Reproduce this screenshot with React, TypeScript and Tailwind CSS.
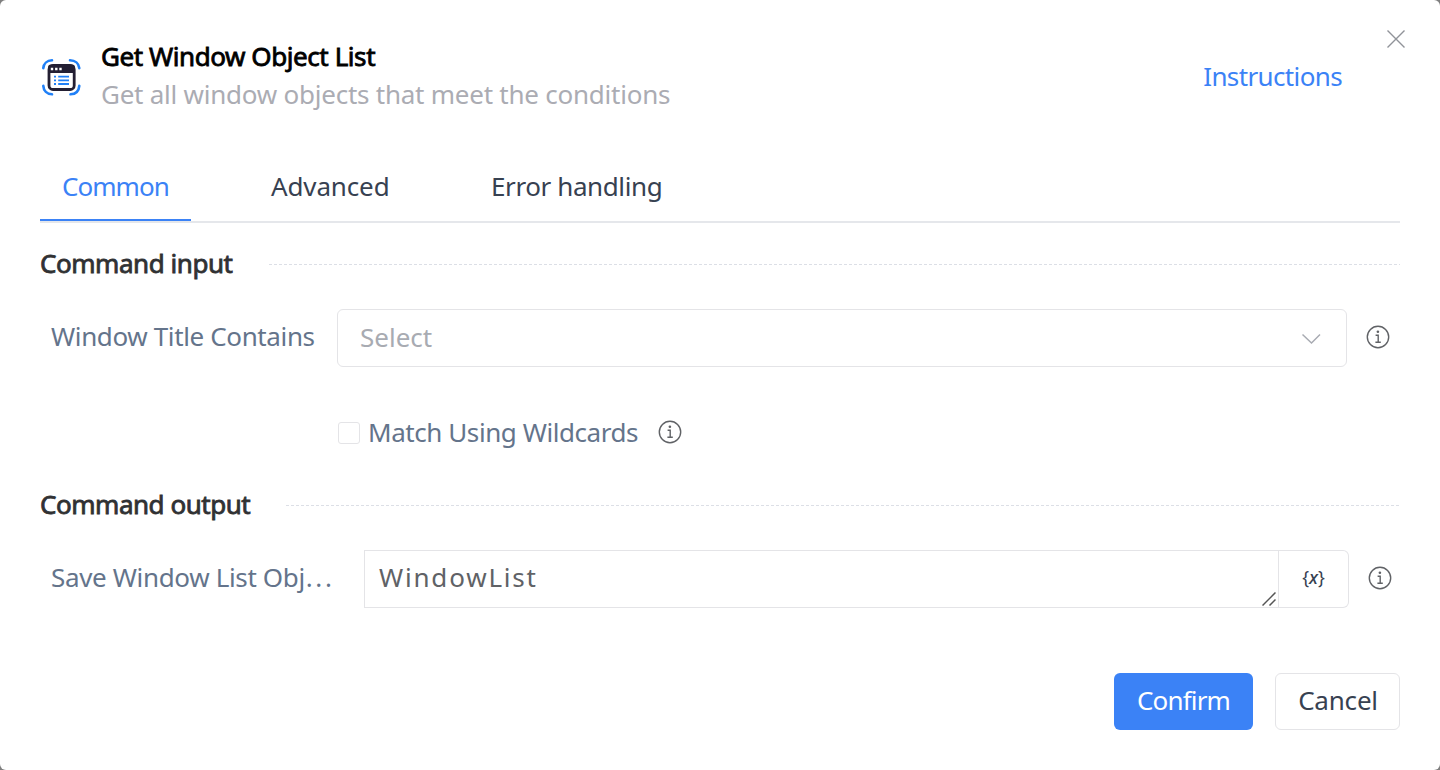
import type { ReactNode } from "react";

function InfoIcon() {
  return (
    <svg className="mb-[2px] h-6 w-6 shrink-0" viewBox="0 0 24 24" fill="none" stroke="#606266" strokeWidth="1.4">
      <circle cx="12" cy="12" r="10.7" />
      <path d="M9.6 10.2H12.2V17M9.4 17.2H14.8" />
      <circle cx="11.9" cy="6.7" r="1.3" fill="#606266" stroke="none" />
    </svg>
  );
}

function WindowIcon() {
  return (
    <svg className="h-10 w-10 shrink-0" viewBox="0 0 40 40" fill="none">
      <g stroke="#2080f7" strokeWidth="2.6" strokeLinecap="round">
        <path d="M2.3 10.2C2.6 5.6 6 2.5 11 2.3" />
        <path d="M29 2.3C34 2.5 37.9 5.6 38.3 10.2" />
        <path d="M2.3 27.8C2.6 32.8 6 36 11 36.3" />
        <path d="M38.3 27.8C37.9 32.8 34.5 36 29.5 36.3" />
      </g>
      <rect x="8" y="7.5" width="25.2" height="24" rx="4" stroke="#231f33" strokeWidth="2.8" />
      <path d="M7 14.9V9.5Q7 6.5 10 6.5H31Q34 6.5 34 9.5V14.9Z" fill="#231f33" />
      <path d="M9.8 9.8H12.2V12.2H9.8ZM14.1 9.8H16.5V12.2H14.1ZM18.3 9.8H20.7V12.2H18.3Z" fill="#fff" />
      <path d="M17.2 18.6H28M17.2 22.3H28M17.2 26H28M13 18.6H15M13 22.3H15M13 26H15" stroke="#2080f7" strokeWidth="1.8" />
    </svg>
  );
}

function Section({ children, width }: { children: ReactNode; width: string }) {
  return (
    <div className="flex items-center">
      <h2 className={"-mt-[2px] whitespace-nowrap text-[#303133] [-webkit-text-stroke:0.8px_#303133] " + width}>{children}</h2>
      <div className="h-px flex-1 bg-[repeating-linear-gradient(90deg,#dcdfe6_0_3px,transparent_3px_5px)]" />
    </div>
  );
}

export default function App() {
  return (
    <div className="h-[770px] w-[1440px] bg-[#7f7f7f] font-['Noto_Sans',sans-serif] text-[26px] leading-[38px]">
      <div className="flex h-full flex-col rounded-[6px] bg-white px-10">
        <header className="relative flex h-[154px] shrink-0 items-start pt-[37px]">
          <div className="mt-[21px] flex w-[61px] pl-px"><WindowIcon /></div>
          <div className="flex-1">
            <h1 className="w-max text-black tracking-[-0.43px] [-webkit-text-stroke:0.8px_#000]">Get Window Object List</h1>
            <p className="w-max tracking-[-0.24px] text-[#abacb3]">Get all window objects that meet the conditions</p>
          </div>
          <a className="mt-[20px] mr-[58px] tracking-[-0.63px] text-[#3b82f6]">Instructions</a>
          <svg className="absolute top-[29px] right-[-6px] h-5 w-5" viewBox="0 0 20 20" stroke="#909399" strokeWidth="1.4">
            <path d="M1.5 1.5L18.5 18.5M18.5 1.5L1.5 18.5" />
          </svg>
        </header>
        <nav className="flex h-[69px] shrink-0 items-stretch border-b-2 border-[#e5e7eb] text-[#374151]">
          <div className="w-[151px] border-b-2 border-[#3b82f6] pt-[13px] pl-[22px] tracking-[-0.95px] text-[#3b82f6]">Common</div>
          <div className="ml-[80px] w-[160px] pt-[13px] tracking-[-0.14px]">Advanced</div>
          <div className="ml-[60px] pt-[13px] tracking-[-0.4px]">Error handling</div>
        </nav>
        <div className="h-[82px] shrink-0 content-center"><Section width="w-[229px] tracking-[-0.45px]">Command input</Section></div>
        <div className="mt-[4px] flex h-[58px] shrink-0 items-center">
          <label className="w-[297px] shrink-0 pb-[4px] pl-[11px] tracking-[-0.37px] text-[#64748b]">Window Title Contains</label>
          <div className="flex h-[58px] w-[1010px] items-center justify-between rounded-[6px] border border-[#e4e4e7] pr-[25px] pl-[22px]">
            <span className="pb-[2px] text-[#a8abb2]">Select</span>
            <svg className="mt-[2px] h-3 w-5" viewBox="0 0 20 12" fill="none" stroke="#a8abb2" strokeWidth="1.5"><path d="M1.5 1.5L10.5 10L19 1.5" /></svg>
          </div>
          <div className="ml-[19px] flex"><InfoIcon /></div>
        </div>
        <div className="mt-[44px] flex h-[44px] shrink-0 items-center pl-[298px]">
          <span className="h-[22px] w-[22px] rounded-[3px] border border-[#e4e4e7]" />
          <span className="ml-[8px] w-[271px] pb-[2px] whitespace-nowrap tracking-[-0.43px] text-[#64748b]">Match Using Wildcards</span>
          <div className="ml-[19px] flex"><InfoIcon /></div>
        </div>
        <div className="mt-[20px] h-[60px] shrink-0 content-center"><Section width="w-[246px] tracking-[-0.47px]">Command output</Section></div>
        <div className="mt-[15px] flex h-[58px] shrink-0 items-center">
          <label className="w-[324px] shrink-0 pb-[4px] pl-[11px] tracking-[-0.35px] text-[#64748b]">Save Window List Obj<span className="ml-[1px] tracking-[2.6px]">...</span></label>
          <div className="relative flex h-[58px] w-[915px] items-center border border-[#e4e4e7] pb-[4px] pl-[14px]">
            <span className="tracking-[1.8px] text-[#606266]">WindowList</span>
            <svg className="absolute right-[2px] bottom-[1px] h-[14px] w-[14px]" viewBox="0 0 14 14" stroke="#555" strokeWidth="1.5">
              <path d="M0.5 13.5L13.5 0.5M7.5 13.5L13.5 7.5" />
            </svg>
          </div>
          <button className="flex h-[58px] w-[70px] items-center justify-center rounded-r-[6px] border border-l-0 border-[#e4e4e7] pb-[4px] text-[18px] text-[#374151]">{"{"}<i className="font-medium">x</i>{"}"}</button>
          <div className="ml-[19px] flex"><InfoIcon /></div>
        </div>
        <footer className="mt-[65px] flex shrink-0 justify-end gap-[22px]">
          <button className="h-[57px] w-[139px] rounded-[6px] bg-[#3b82f6] pb-[3px] tracking-[-0.85px] text-white">Confirm</button>
          <button className="h-[57px] w-[125px] rounded-[6px] border border-[#e4e4e7] pb-[3px] pl-[1px] tracking-[-0.2px] text-[#374151]">Cancel</button>
        </footer>
      </div>
    </div>
  );
}
